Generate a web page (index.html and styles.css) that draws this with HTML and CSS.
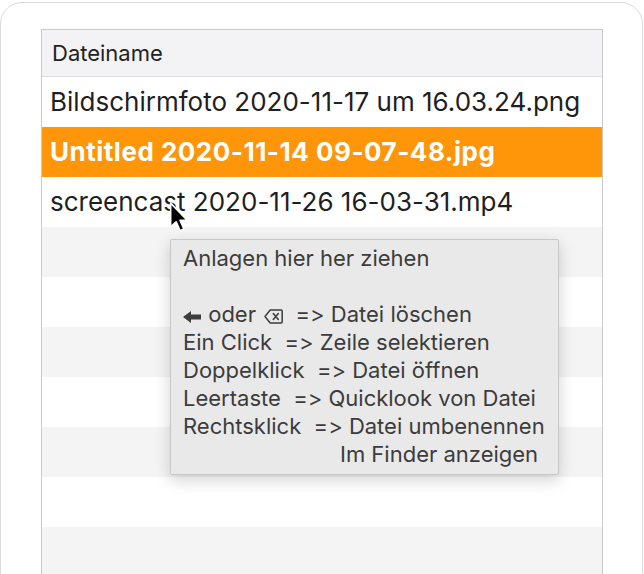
FILE: index.html
```html
<!DOCTYPE html>
<html lang="de">
<head>
	<title>Anlagen</title>
	<meta charset="utf-8" />
	<link rel="stylesheet" href="styles.css">
</head>
<body>
	<div class="window">
		<div class="files">
			<div class="files-header">Dateiname</div>
			<div class="file-row">Bildschirmfoto 2020-11-17 um 16.03.24.png</div>
			<div class="file-row selected">Untitled 2020-11-14 09-07-48.jpg</div>
			<div class="file-row">screencast 2020-11-26 16-03-31.mp4</div>
			<div class="file-row"></div>
			<div class="file-row"></div>
			<div class="file-row"></div>
			<div class="file-row"></div>
			<div class="file-row"></div>
			<div class="file-row"></div>
			<div class="file-row"></div>

			<div class="tooltip">
				<div>Anlagen hier her ziehen</div>
				<div>&nbsp;</div>
				<div>
					<svg class="key key-left" width="18" height="12" viewBox="0 0 18 12">
						<path d="M0 6 L8 0 L8 3.6 L18 3.6 L18 8.4 L8 8.4 L8 12 Z" fill="#3c3c3c" />
					</svg> oder <svg class="key key-back" width="19" height="15" viewBox="0 0 19 15">
						<path d="M6.2 1 H17 A1.2 1.2 0 0 1 18.2 2.2 V12.8 A1.2 1.2 0 0 1 17 14 H6.2 L1 7.5 Z" fill="none" stroke="#3c3c3c" stroke-width="1.5" stroke-linejoin="round" />
						<path d="M9.3 4.6 L14.3 10.4 M14.3 4.6 L9.3 10.4" stroke="#3c3c3c" stroke-width="1.6" stroke-linecap="round" />
					</svg>&nbsp; =&gt; Datei löschen
				</div>
				<div>Ein Click&nbsp; =&gt; Zeile selektieren</div>
				<div>Doppelklick&nbsp; =&gt; Datei öffnen</div>
				<div>Leertaste&nbsp; =&gt; Quicklook von Datei</div>
				<div>Rechtsklick&nbsp; =&gt; Datei umbenennen</div>
				<div class="indent">Im Finder anzeigen</div>
			</div>

			<svg class="cursor" width="22" height="34" viewBox="0 0 20 30">
				<path d="M1.5 1.5 L1.5 23 L6.5 18.5 L10 26.5 L13.5 25 L10 17 L16.5 17 Z" fill="#000" stroke="#fff" stroke-width="1.5" stroke-linejoin="round" />
			</svg>
		</div>
	</div>
</body>
</html>
```

FILE: styles.css
```css
:root {
	--text-color: #1f1f1f;
	--tip-text: #3c3c3c;
	--stripe: #f4f4f4;
	--accent: #ff9508;
	--line: #cacaca;
}

* {
	box-sizing: border-box;
	margin: 0;
	padding: 0;
}

body {
	background: #fff;
	font-family: Inter, "Liberation Sans", sans-serif;
	font-feature-settings: "calt" 0, "liga" 0;
	color: var(--text-color);
	overflow: hidden;
}

.window {
	margin-top: 2px;
	width: 643px;
	height: 600px;
	border: 1px solid #dadada;
	border-radius: 22px;
	padding: 26px 0 0 40px;
}

.files {
	position: relative;
	width: 562px;
	border: 1px solid var(--line);
	border-bottom: none;
}

.files-header {
	height: 47px;
	padding-left: 10px;
	background: #f3f3f5;
	border-bottom: 1px solid #dedede;
	font-size: 22px;
	line-height: 46px;
	color: #222;
}

.file-row {
	height: 50px;
	padding-left: 8px;
	font-size: 26px;
	line-height: 50px;
	white-space: nowrap;
}

.file-row:nth-child(odd) {
	background: var(--stripe);
}

.file-row.selected {
	background: var(--accent);
	color: #fff;
	font-weight: 700;
	letter-spacing: 0.5px;
}

.tooltip {
	position: absolute;
	left: 128px;
	top: 209px;
	width: 389px;
	height: 236px;
	padding: 4px 0 0 12px;
	background: #e9e9e9;
	border: 1px solid #c8c8c8;
	border-radius: 2px;
	box-shadow: 0 5px 16px rgba(0, 0, 0, 0.18);
	font-size: 22px;
	line-height: 28px;
	color: var(--tip-text);
	white-space: nowrap;
}

.key {
	vertical-align: -1px;
}

.key-left {
	margin-right: 1px;
}

.key-back {
	margin-left: 2px;
	vertical-align: -2px;
}

.indent {
	padding-left: 157px;
}

.cursor {
	position: absolute;
	left: 127px;
	top: 171px;
}
```
